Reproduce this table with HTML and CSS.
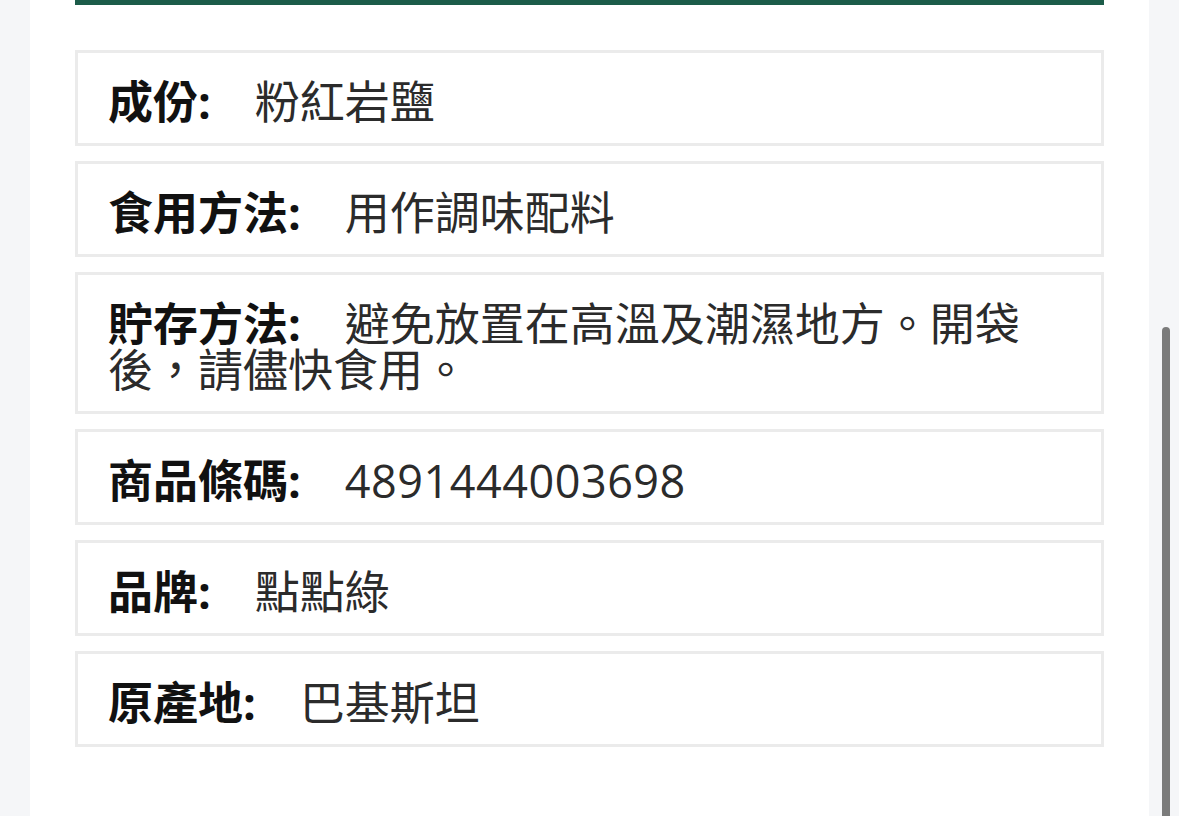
FILE: index.html
```html
<!DOCTYPE html>
<html lang="zh-Hant">
<head>
    <meta charset="UTF-8">
    <meta name="viewport" content="width=device-width, initial-scale=1.0">
    <title>商品資料</title>
    <link rel="stylesheet" href="styles.css">
</head>
<body>
    <div class="page">
        <!-- tab underline (tabs scrolled out of view) -->
        <div class="tab-line"></div>

        <!-- product spec rows -->
        <div class="spec-list">
            <div class="spec-row">
                <span class="label">成份:</span><span class="value">粉紅岩鹽</span>
            </div>
            <div class="spec-row">
                <span class="label">食用方法:</span><span class="value">用作調味配料</span>
            </div>
            <div class="spec-row">
                <span class="label">貯存方法:</span><span class="value">避免放置在高溫及潮濕地方。開袋後，請儘快食用。</span>
            </div>
            <div class="spec-row">
                <span class="label">商品條碼:</span><span class="value num">4891444003698</span>
            </div>
            <div class="spec-row">
                <span class="label">品牌:</span><span class="value">點點綠</span>
            </div>
            <div class="spec-row">
                <span class="label">原產地:</span><span class="value">巴基斯坦</span>
            </div>
        </div>
    </div>

    <div class="scroll-thumb"></div>
</body>
</html>
```

FILE: styles.css
```css
/* Reset and Base Styles */
* {
    margin: 0;
    padding: 0;
    box-sizing: border-box;
    font-family: "Open Sans", "Noto Sans CJK TC", sans-serif;
}

html,
body {
    height: 100%;
    overflow: hidden;
}

body {
    background: #f5f6f8;
}

.page {
    margin: 0 30px;
    height: 100%;
    padding: 0 45px;
    background: #fff;
}

.tab-line {
    height: 5px;
    background: #1c5c49;
}

/* Spec rows */
.spec-list {
    display: flex;
    flex-direction: column;
    gap: 15px;
    margin-top: 45px;
}

.spec-row {
    border: 3px solid #ebebeb;
    padding: 26px 30px 18px;
    font-size: 45px;
    line-height: 46px;
    color: #2b2b2b;
}

.spec-row .label {
    font-weight: 700;
    color: #111;
    margin-right: 44px;
}

.spec-row .value {
    font-weight: 400;
}

.spec-row .num {
    letter-spacing: 0.5px;
}

/* overlay scrollbar */
.scroll-thumb {
    position: fixed;
    top: 327px;
    right: 9px;
    bottom: 0;
    width: 8px;
    border-radius: 4px 4px 0 0;
    background: #7b7b7b;
}
```
